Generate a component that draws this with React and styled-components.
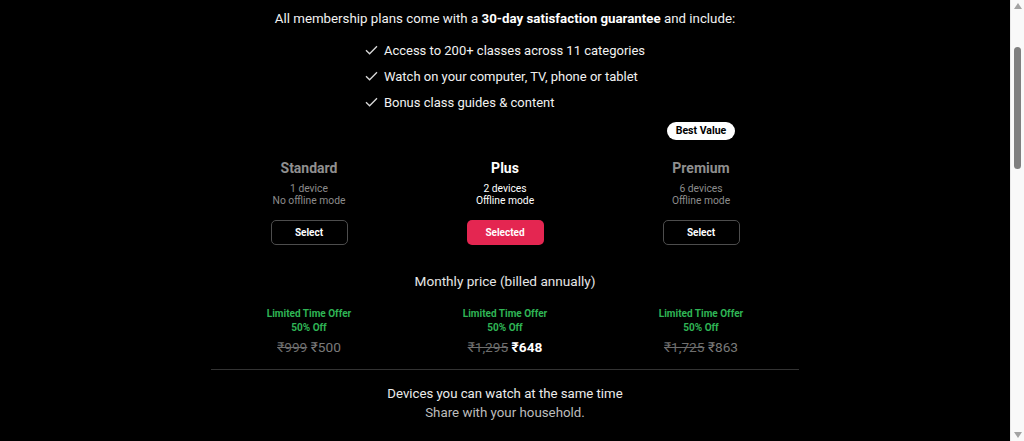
import React from 'react';
import styled, { createGlobalStyle } from 'styled-components';

const GlobalStyle = createGlobalStyle`
  html, body {
    margin: 0;
    padding: 0;
    background: #000;
  }
  body {
    font-family: Roboto, "Liberation Sans", sans-serif;
    color: #fff;
  }
`;

const plans = [
  { name: 'Standard', devices: '1 device', offline: 'No offline mode', old: '₹999', price: '₹500' },
  { name: 'Plus', devices: '2 devices', offline: 'Offline mode', old: '₹1,295', price: '₹648', selected: true },
  { name: 'Premium', devices: '6 devices', offline: 'Offline mode', old: '₹1,725', price: '₹863', badge: 'Best Value' },
];

const perks = [
  'Access to 200+ classes across 11 categories',
  'Watch on your computer, TV, phone or tablet',
  'Bonus class guides & content',
];

const Shell = styled.div`
  display: flex;
  height: 100vh;
  overflow: hidden;
`;

const Main = styled.main`
  flex: 1;
  padding-top: 9px;
  display: flex;
  flex-direction: column;
  align-items: center;
`;

const Intro = styled.p`
  margin: 0;
  font-size: 13.3px;
  line-height: 20px;
  color: #f2f2f2;
  b { font-weight: 700; color: #fff; }
`;

const PerkList = styled.ul`
  list-style: none;
  margin: 8px 0 0;
  padding: 0;
`;

const Perk = styled.li`
  display: flex;
  align-items: center;
  gap: 6px;
  height: 26px;
  font-size: 13px;
  color: #f2f2f2;
`;

const Check = () => (
  <svg width="13" height="10" viewBox="0 0 13 10" fill="none">
    <path d="M1 5.2 L4.6 8.8 L12 1.2" stroke="#d9d9d9" strokeWidth="1.3" />
  </svg>
);

const Plans = styled.div`
  width: 588px;
  margin-top: 7px;
  display: grid;
  grid-template-columns: repeat(3, 1fr);
`;

const Column = styled.div`
  display: flex;
  flex-direction: column;
  align-items: center;
`;

const BadgeSlot = styled.div`
  height: 18px;
  display: flex;
  justify-content: center;
`;

const Badge = styled.span`
  background: #fff;
  color: #000;
  border-radius: 9px;
  padding: 0 9px;
  font-size: 10.5px;
  font-weight: 700;
  line-height: 18px;
`;

const PlanName = styled.div`
  margin-top: 18px;
  font-size: 14px;
  line-height: 20px;
  font-weight: 700;
  color: ${p => (p.$active ? '#fff' : '#8f8f8f')};
`;

const PlanMeta = styled.div`
  margin-top: 5px;
  font-size: 10.3px;
  line-height: 12px;
  text-align: center;
  color: ${p => (p.$active ? '#fff' : '#8c8c8c')};
`;

const SelectButton = styled.button`
  margin-top: 13px;
  width: 77px;
  height: 25px;
  box-sizing: border-box;
  border-radius: 5px;
  border: ${p => (p.$active ? 'none' : '1.5px solid #4d4d4d')};
  background: ${p => (p.$active ? '#e42651' : 'transparent')};
  color: #fff;
  font-family: inherit;
  font-size: 10px;
  font-weight: 700;
  cursor: pointer;
`;

const Subhead = styled.div`
  margin-top: 26px;
  font-size: 13.6px;
  line-height: 20px;
  color: #e6e6e6;
`;

const Prices = styled.div`
  width: 588px;
  margin-top: 16px;
  display: grid;
  grid-template-columns: repeat(3, 1fr);
`;

const Offer = styled.div`
  font-size: 10px;
  line-height: 14px;
  font-weight: 700;
  color: #2fb555;
  text-align: center;
`;

const PriceLine = styled.div`
  margin-top: 3px;
  font-size: 13.7px;
  line-height: 18px;
  text-align: center;
  color: #7a7a7a;
  s { color: #6e6e6e; }
`;

const Current = styled.span`
  color: ${p => (p.$active ? '#fff' : '#7a7a7a')};
  font-weight: ${p => (p.$active ? 700 : 400)};
`;

const Divider = styled.hr`
  width: 588px;
  margin: 13px 0 0;
  border: none;
  border-top: 1px solid #333;
`;

const Caption = styled.div`
  margin-top: 14px;
  font-size: 13.2px;
  line-height: 20px;
  color: #ececec;
`;

const Note = styled.div`
  font-size: 13.3px;
  line-height: 18px;
  color: #bdbdbd;
`;

const ScrollBar = styled.aside`
  width: 13px;
  flex-shrink: 0;
  background: #f9f9f9;
  border-left: 1px solid #e9e9e9;
  display: flex;
  flex-direction: column;
  align-items: center;
  padding: 3px 0;
`;

const Thumb = styled.div`
  width: 7px;
  height: 122px;
  margin-top: 38px;
  border-radius: 4px;
  background: #7f7f7f;
`;

const Arrow = ({ down }) => (
  <svg width="8" height="6" viewBox="0 0 8 6" style={{ marginTop: down ? 'auto' : 0 }}>
    <path d={down ? 'M0 0 H8 L4 6 Z' : 'M0 6 H8 L4 0 Z'} fill="#a3a3a3" />
  </svg>
);

const App = () => (
  <>
    <GlobalStyle />
    <Shell>
      <Main>
        <Intro>
          All membership plans come with a <b>30-day satisfaction guarantee</b> and include:
        </Intro>
        <PerkList>
          {perks.map(p => (
            <Perk key={p}>
              <Check />
              {p}
            </Perk>
          ))}
        </PerkList>

        <Plans>
          {plans.map(p => (
            <Column key={p.name}>
              <BadgeSlot>{p.badge && <Badge>{p.badge}</Badge>}</BadgeSlot>
              <PlanName $active={p.selected}>{p.name}</PlanName>
              <PlanMeta $active={p.selected}>
                {p.devices}
                <br />
                {p.offline}
              </PlanMeta>
              <SelectButton $active={p.selected}>{p.selected ? 'Selected' : 'Select'}</SelectButton>
            </Column>
          ))}
        </Plans>

        <Subhead>Monthly price (billed annually)</Subhead>
        <Prices>
          {plans.map(p => (
            <Column key={p.name}>
              <Offer>
                Limited Time Offer
                <br />
                50% Off
              </Offer>
              <PriceLine>
                <s>{p.old}</s> <Current $active={p.selected}>{p.price}</Current>
              </PriceLine>
            </Column>
          ))}
        </Prices>

        <Divider />
        <Caption>Devices you can watch at the same time</Caption>
        <Note>Share with your household.</Note>
      </Main>
      <ScrollBar>
        <Arrow />
        <Thumb />
        <Arrow down />
      </ScrollBar>
    </Shell>
  </>
);

export default App;
